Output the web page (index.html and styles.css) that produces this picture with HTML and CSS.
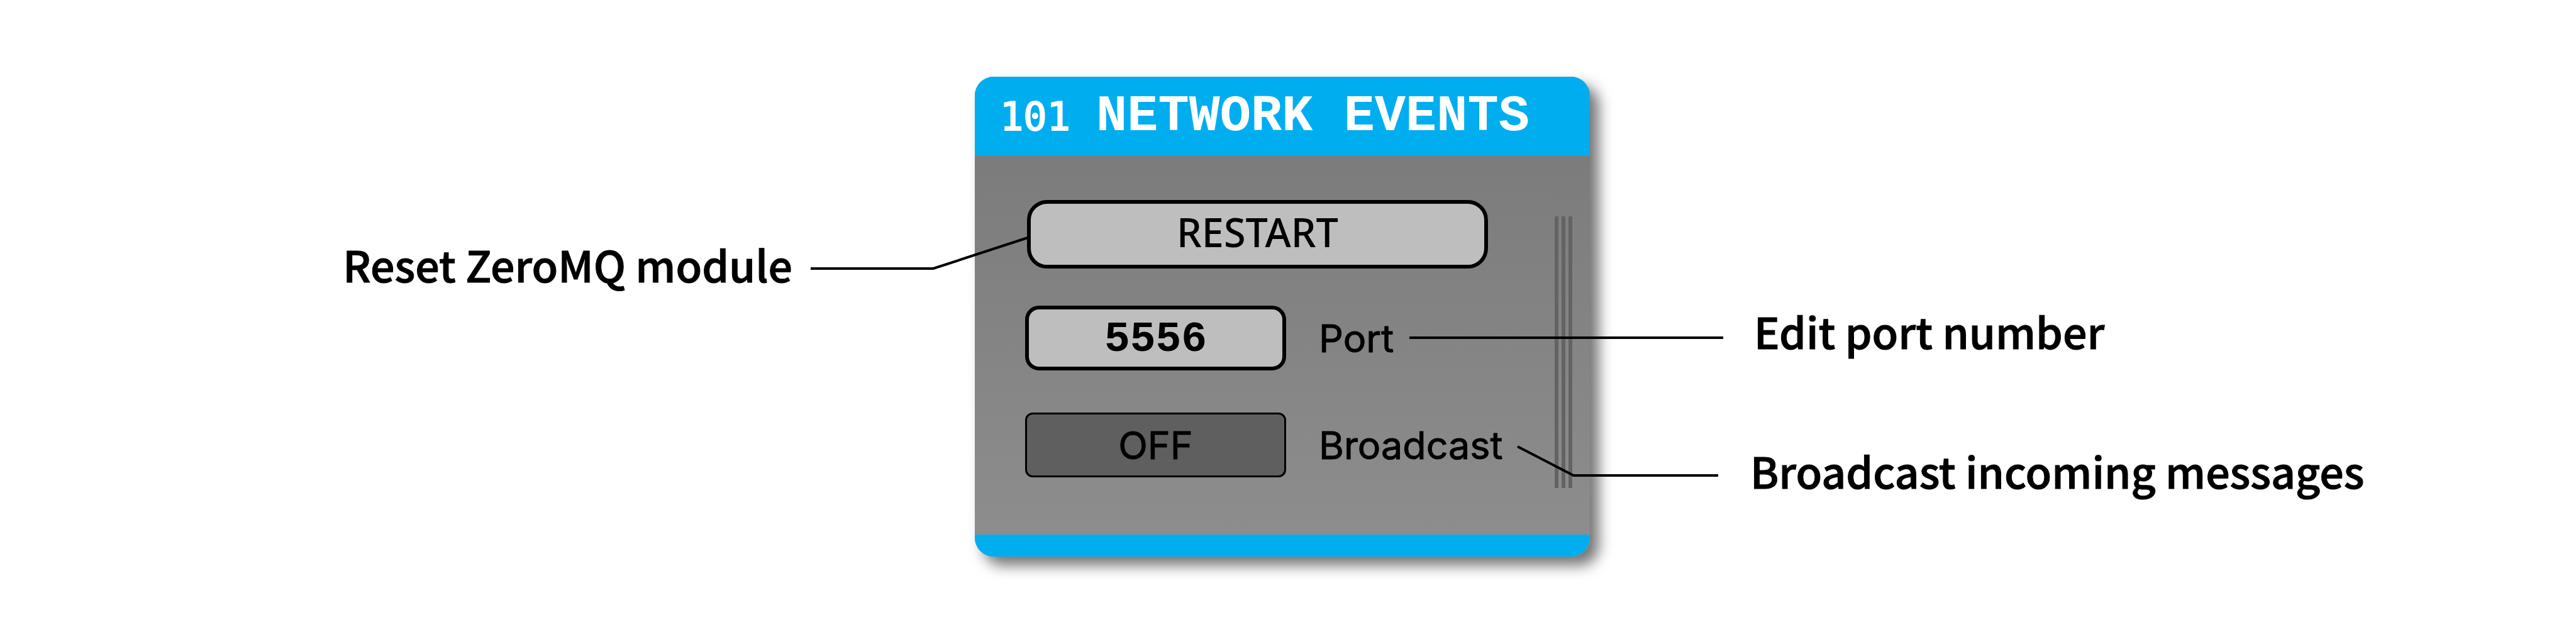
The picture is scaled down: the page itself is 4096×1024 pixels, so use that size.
FILE: index.html
```html
<!DOCTYPE html>
<html lang="en">
<head>
<meta charset="utf-8">
<title>Network Events</title>
<link rel="stylesheet" href="styles.css">
</head>
<body>
<main class="figure">
  <div class="notes notes-left">
    <p class="note">Reset ZeroMQ module</p>
  </div>
  <section class="module">
    <header class="module-header">
      <span class="module-id">101</span>
      <h1 class="module-title">NETWORK EVENTS</h1>
    </header>
    <div class="module-body">
      <div class="controls">
        <button class="restart" type="button">RESTART</button>
        <div class="row">
          <input class="field" id="port" type="text" value="5556">
          <label class="label" for="port">Port</label>
        </div>
        <div class="row">
          <button class="toggle" id="broadcast" type="button">OFF</button>
          <label class="label" for="broadcast">Broadcast</label>
        </div>
      </div>
      <div class="grip"><i class="bar"></i><i class="bar"></i><i class="bar"></i></div>
    </div>
    <footer class="module-footer"></footer>
  </section>
  <div class="notes notes-right">
    <p class="note note-port">Edit port number</p>
    <p class="note">Broadcast incoming messages</p>
  </div>
  <svg class="leaders" viewBox="0 0 4096 1024" aria-hidden="true">
    <path d="M1289 427H1484L1634 378M2241 537H2740M2413 710L2502 756H2732"/>
  </svg>
</main>
</body>
</html>
```
FILE: styles.css
```css
* {
  box-sizing: border-box;
}

body {
  margin: 0;
  background: #fff;
  color: #000;
}

.figure {
  position: relative;
  display: grid;
  grid-template-columns: 1550fr 978fr 1568fr;
  align-items: start;
  padding: 122px 0 139px;
}

.notes {
  display: flex;
  flex-direction: column;
}

.notes-left {
  align-items: flex-end;
  padding: 248px 290px 0 0;
}

.notes-right {
  gap: 122px;
  padding: 354px 0 0 255px;
}

.note {
  margin: 0;
  font: 500 68px/100px "Noto Sans CJK SC", sans-serif;
  -webkit-text-stroke: 1px #000;
  white-space: nowrap;
}

.note-port {
  padding-left: 6px;
}

.module {
  border-radius: 30px;
  background: linear-gradient(#787878, #8e8e8e);
  box-shadow: 14px 14px 22px rgba(0, 0, 0, 0.55);
  overflow: hidden;
}

.module-header {
  display: flex;
  align-items: baseline;
  gap: 41px;
  height: 126px;
  padding: 16px 40px 0;
  background: #00aeef;
  color: #fff;
}

.module-id {
  font: 62px/96px "DejaVu Sans Mono", monospace;
  -webkit-text-stroke: 2px #fff;
}

.module-title {
  margin: 0;
  font: bold 82px/96px "Liberation Mono", monospace;
  white-space: nowrap;
}

.module-body {
  display: flex;
  justify-content: space-between;
  padding: 70px 28px 74px 80px;
}

.controls {
  display: flex;
  flex-direction: column;
}

.restart,
.field,
.toggle {
  display: block;
  height: 103px;
  padding: 0;
  border: 6px solid #000;
  color: #000;
  text-align: center;
}

.restart {
  width: 733px;
  height: 109px;
  margin: 0 0 59px 3px;
  padding-bottom: 8px;
  border-radius: 32px;
  background: #bebebe;
  font: 500 63px/72px "Noto Sans", sans-serif;
}

.row {
  display: flex;
  align-items: center;
  gap: 52px;
}

.row + .row {
  margin-top: 67px;
}

.field {
  width: 415px;
  padding-top: 4px;
  border-radius: 22px;
  background: #bebebe;
  font: bold 68px/72px "Liberation Mono", monospace;
}

.toggle {
  width: 415px;
  border-width: 3px;
  border-radius: 12px;
  background: #5f5f5f;
}

.toggle,
.label {
  font: 61px/72px Inter, sans-serif;
  -webkit-text-stroke: 1px #000;
}

.grip {
  display: flex;
  gap: 5px;
  height: 432px;
  margin-top: 26px;
}

.bar {
  width: 6px;
  background: #636363;
}

.module-footer {
  height: 35px;
  background: #00aeef;
}

.leaders {
  position: absolute;
  inset: 0;
  width: 100%;
  pointer-events: none;
}

.leaders path {
  fill: none;
  stroke: #000;
  stroke-width: 4;
}
```
